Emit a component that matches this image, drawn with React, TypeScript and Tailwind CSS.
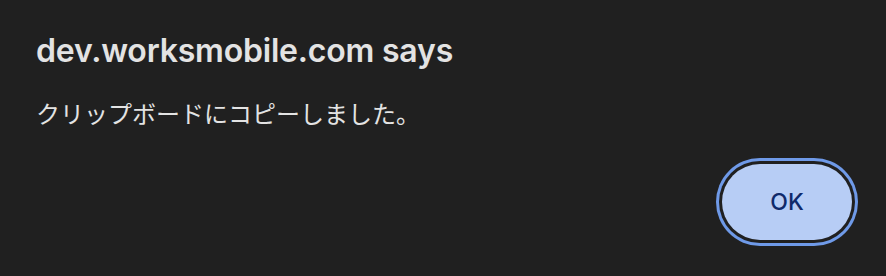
export default function App() {
  return (
    <div className="w-[886px] h-[276px] bg-[#202020] flex flex-col pl-[36px] pr-[34px] pb-[36px] pt-[32px] text-[#e3e3e3] font-['Inter','Noto_Sans_CJK_JP',sans-serif]">
      <h1 className="text-[32px] leading-[38px] font-semibold tracking-[-0.2px]">dev.worksmobile.com says</h1>
      <p className="mt-[29px] text-[24px] leading-[28px] font-['Noto_Sans_CJK_JP',sans-serif]">
        クリップボードにコピーしました。
      </p>
      <div className="mt-auto flex justify-end">
        <button className="w-[130px] h-[76px] rounded-full bg-[#b7cdf5] text-[#0f2a6b] text-[23px] font-medium ring-[3px] ring-[#6f9ae8] ring-offset-[3px] ring-offset-[#202020]">
          OK
        </button>
      </div>
    </div>
  );
}
